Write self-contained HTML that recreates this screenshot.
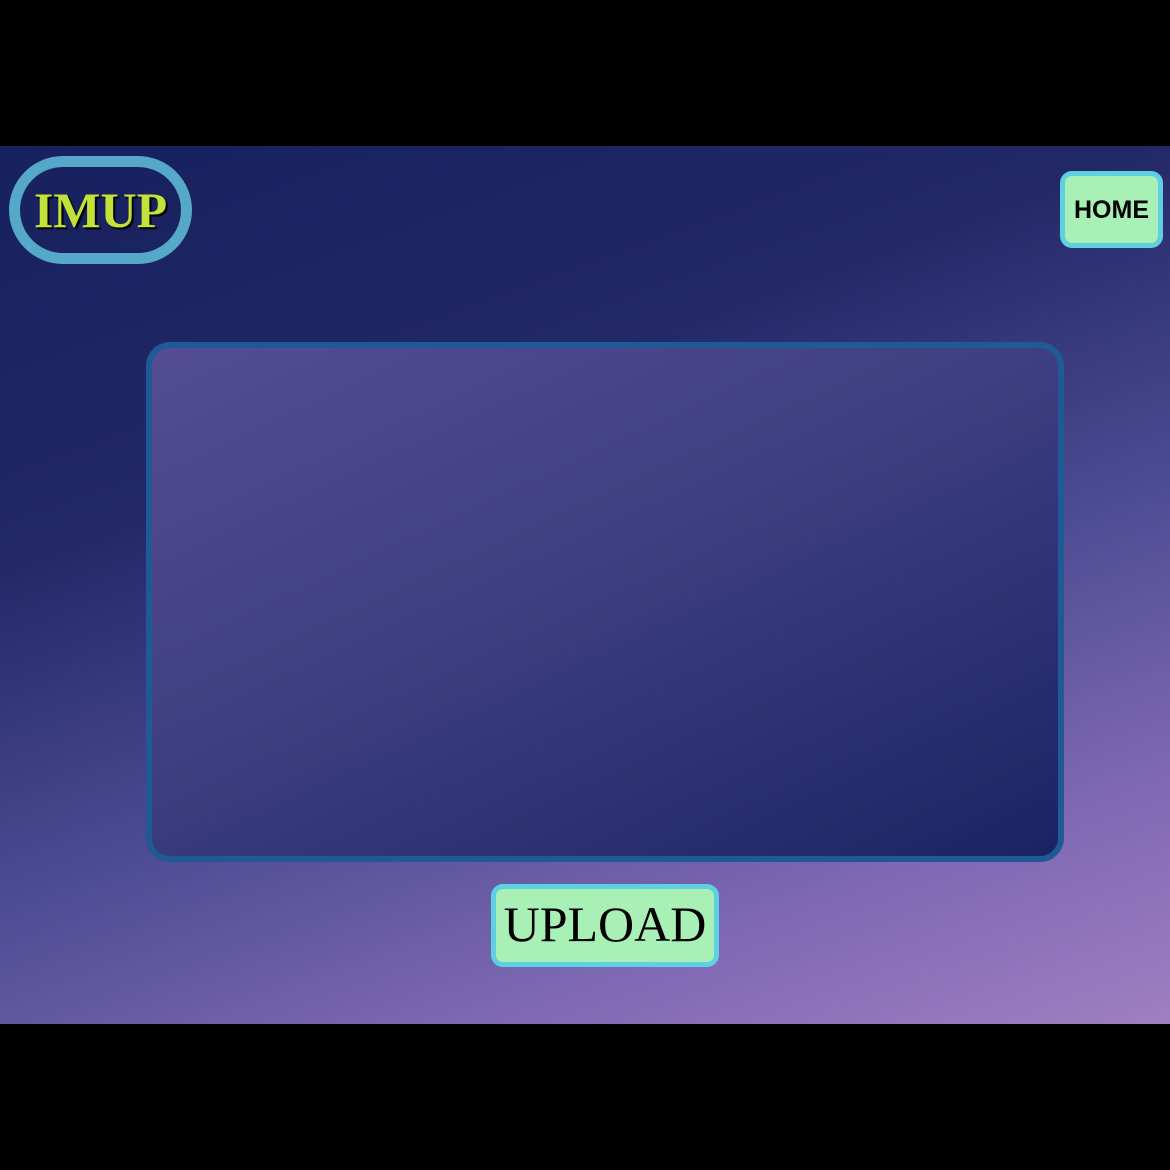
<!DOCTYPE html>
<html><head><style>
html,body{margin:0;padding:0;background:#000;width:1170px;height:1170px;overflow:hidden}
.bg{position:absolute;left:0;top:146px;width:1170px;height:878px;
background:linear-gradient(160deg,#16215e 0%,#222866 32%,#4a4a90 57%,#7d68b2 80%,#a07ec2 100%)}
.logo{position:absolute;left:9px;top:156px;width:161px;height:86px;border:11px solid #56a8c8;border-radius:60px;
font:bold 50px "Liberation Serif",serif;color:#c2e23a;text-shadow:2px 2px 1px #000;text-align:center;line-height:86px}
.home{position:absolute;left:1060px;top:171px;width:93px;height:67px;border:5px solid #5ed0e2;border-radius:12px;background:#a8f0b5;
font:bold 25px "Liberation Sans",sans-serif;color:#000;text-align:center;line-height:69px}
.box{position:absolute;left:146px;top:342px;width:906px;height:508px;border:6px solid #1f5a96;border-radius:24px;
background:linear-gradient(155deg,#544d92 0%,#3e3f80 45%,#1a2462 100%)}
.up{position:absolute;left:491px;top:884px;width:218px;height:73px;border:5px solid #5ed0e2;border-radius:12px;background:#a8f0b5;
font:50px "Liberation Serif",serif;color:#000;text-align:center;line-height:70px}
</style></head><body>
<div class="bg"></div>
<div class="logo">IMUP</div>
<div class="home">HOME</div>
<div class="box"></div>
<div class="up">UPLOAD</div>
</body></html>
